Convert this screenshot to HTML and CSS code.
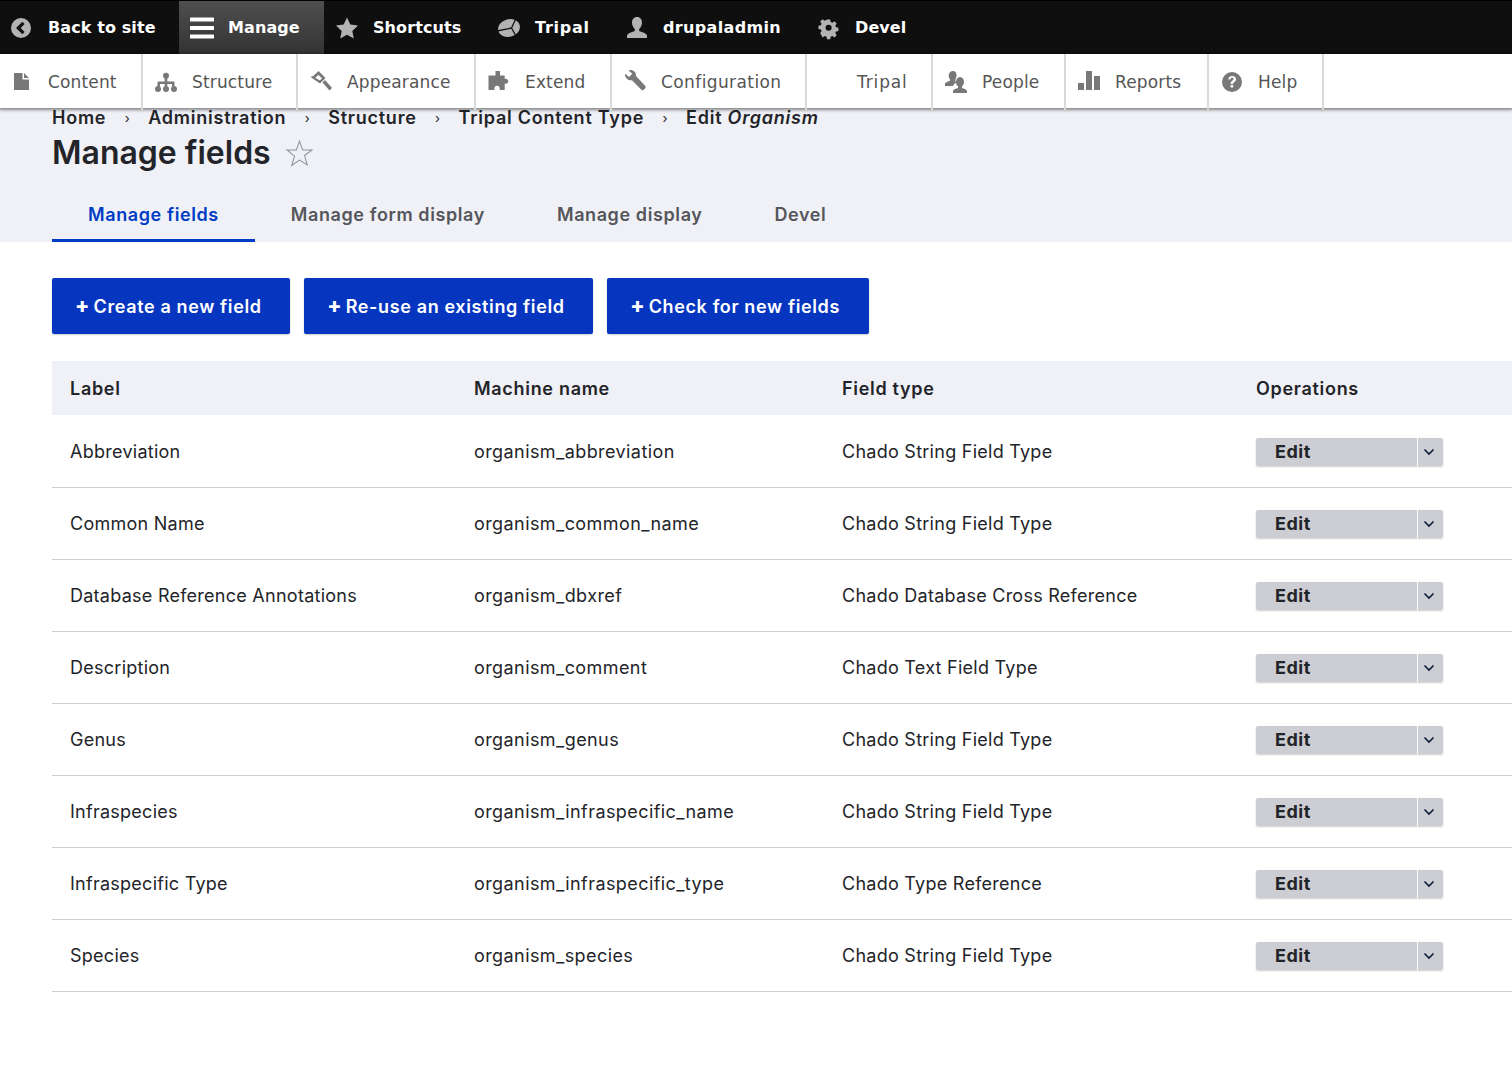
FILE: index.html
```html
<!DOCTYPE html>
<html lang="en">
<head>
<meta charset="utf-8">
<title>Manage fields</title>
<link rel="stylesheet" href="styles.css">
</head>
<body>
<nav class="bar">
  <a class="bar-item first"><svg class="ico" viewBox="0 0 24 24"><circle cx="11" cy="12" r="10" fill="#b3b3b3"/><path d="M13.500 6.800 8.300 12l5.200 5.200" fill="none" stroke="#111" stroke-width="3.200"/></svg>Back to site</a>
  <a class="bar-item active"><svg class="ico" viewBox="0 0 24 24"><path d="M1.200 3.500h21.600M1.200 12h21.600M1.200 20.500h21.600" fill="none" stroke="#fff" stroke-width="4" stroke-linecap="round"/></svg>Manage</a>
  <a class="bar-item"><svg class="ico" viewBox="0 0 24 24"><path d="m12 1.500 3.300 7.100 7.700 1-5.700 5.300 1.500 7.700-6.800-3.800-6.800 3.800 1.500-7.700L1 9.600l7.700-1z" fill="#b3b3b3"/></svg>Shortcuts</a>
  <a class="bar-item short"><svg class="ico" viewBox="0 0 24 24"><ellipse cx="12" cy="12" rx="11" ry="8.800" transform="rotate(-14 12 12)" fill="#b3b3b3"/><path d="M19 2.500 14.500 12 0 15M14.500 12l5 9" fill="none" stroke="#111" stroke-width="1.300"/></svg>Tripal</a>
  <a class="bar-item long"><svg class="ico" viewBox="0 0 24 24"><path d="M12 1c3.300 0 5 2.500 5 5.500 0 2.800-1.300 5.200-2.800 6.500v2c2.500 1 7.300 2.200 7.800 4.500V22H2v-2.500C2.500 17.200 7.300 16 9.800 15v-2C8.300 11.700 7 9.300 7 6.500 7 3.500 8.700 1 12 1z" fill="#b3b3b3"/></svg>drupaladmin</a>
  <a class="bar-item devel"><svg class="ico" viewBox="0 0 24 24"><path fill-rule="evenodd" d="M10 2h4l.6 3 2.100.9 2.600-1.700 2.800 2.800-1.700 2.600.9 2.100 3 .6v3.900l-3 .6-.9 2.100 1.700 2.600-2.800 2.800-2.600-1.700-2.100.9-.6 3h-4l-.6-3-2.100-.9-2.600 1.700L1.500 19l1.700-2.600-.9-2.100-3-.6v-3.900l3-.6.9-2.100L1.500 4.500 4.300 1.700l2.600 1.700 2.100-.9zM12 8.300a3.800 3.800 0 1 0 0 7.600 3.800 3.800 0 0 0 0-7.600z" fill="#b3b3b3" transform="translate(2 2) scale(.8)"/></svg>Devel</a>
</nav>
<nav class="tray">
  <a class="tray-item first"><svg class="tico" viewBox="0 0 24 24"><path d="M4 3h8.500v6.500H19V20H4zM14 3l5 5h-5z" fill="#787878"/></svg>Content</a>
  <a class="tray-item"><svg class="tico" viewBox="0 0 24 24"><path d="M10.700 7h2.600v4.500h6.200a1 1 0 0 1 1 1v4h-2.500v-2.500h-4.700v2.500h-2.600v-2.500H6v2.500H3.500v-4a1 1 0 0 1 1-1h6.200z" fill="#787878"/><circle cx="12" cy="5.800" r="3" fill="#787878"/><circle cx="4" cy="19" r="3" fill="#787878"/><circle cx="12" cy="19" r="3" fill="#787878"/><circle cx="20" cy="19" r="3" fill="#787878"/></svg>Structure</a>
  <a class="tray-item"><svg class="tico" viewBox="0 0 24 24"><path fill-rule="evenodd" d="M9.500 1 16.500 8l-5.500 5.500L1.500 7l3-1.200zM9.400 5 6.200 7.700l4.700 2.900 2.100-2.300z" fill="#787878"/><path d="m13.500 12.500 2.500-2.500 7 8-2.500 2.500z" fill="#787878"/></svg>Appearance</a>
  <a class="tray-item"><svg class="tico" viewBox="0 0 24 24"><path d="M8.500 1h4.500v4.500h4.700V9a2.500 2.500 0 1 1 0 4.500V20h-5.200a2.800 2.800 0 1 0-4.900 0H1.500V5.500h7z" fill="#787878"/></svg>Extend</a>
  <a class="tray-item long"><svg class="tico" viewBox="0 0 24 24"><path d="M7.500 0c3.200 0 5.800 2.500 5.500 6l9.500 10.300c1 1.300-2.400 5-3.800 3.700L9 10.300C5.500 10.800 1.500 8 2 3.700l4 3.300 3.300-3.200L5.500.5z" fill="#787878"/></svg>Configuration</a>
  <a class="tray-item plain short">Tripal</a>
  <a class="tray-item"><svg class="tico" viewBox="0 0 24 24"><path d="M9 1c2.500 0 3.600 2 3.600 4.300 0 .9-.2 1.800-.6 2.700-.9 2-1 3 .3 4.500-1.500 1-2.800 2-3.300 3.500H1v-2c0-1.700 3.600-2.500 5-3.200V9.500C5 8.500 4.700 7 4.700 5.300 4.700 3 6.500 1 9 1zM16 7c2.500 0 4 2.200 4 4.700 0 2-.7 3.600-2 4.600v1.700c1.500.7 5 1.500 5 3.200V23H9v-1.800c0-1.700 3.500-2.500 5-3.200v-1.700c-1.300-1-2-2.600-2-4.600C12 9.200 13.500 7 16 7z" fill="#787878"/></svg>People</a>
  <a class="tray-item"><svg class="tico" viewBox="0 0 24 24"><path d="M1 13h6v7H1zM9 1h6v19H9zM17 6h6v14h-6z" fill="#787878"/></svg>Reports</a>
  <a class="tray-item"><svg class="tico" viewBox="0 0 24 24"><circle cx="12" cy="12" r="10" fill="#787878"/><path d="M8.300 9.500C8.500 7 10 6 12.200 6c2.300 0 3.900 1.300 3.900 3.200 0 2.600-3 2.800-3 4.800h-2.400c0-3.200 2.900-3.300 2.900-4.900 0-.8-.6-1.300-1.500-1.300-1 0-1.500.6-1.700 1.700zM10.600 15h2.600v2.600h-2.600z" fill="#fff"/></svg>Help</a>
</nav>
<header class="head">
  <ol class="crumbs">
    <li>Home</li><li class="sep">›</li>
    <li>Administration</li><li class="sep">›</li>
    <li>Structure</li><li class="sep">›</li>
    <li>Tripal Content Type</li><li class="sep">›</li>
    <li>Edit <em>Organism</em></li>
  </ol>
  <div class="title-row">
    <h1>Manage fields</h1>
    <svg class="star" viewBox="0 0 28 28"><path d="m14 2 3 8.600h9l-7.200 5.400 2.700 9L14 20.400 6.500 25.600l2.700-9L2 10.600h9z" fill="none" stroke="#8e929c" stroke-width="1"/></svg>
  </div>
  <div class="tabs">
    <a class="tab current">Manage fields</a>
    <a class="tab">Manage form display</a>
    <a class="tab">Manage display</a>
    <a class="tab">Devel</a>
  </div>
</header>
<main class="main">
  <div class="actions">
    <a class="btn"><span class="plus">+</span>Create a new field</a>
    <a class="btn"><span class="plus">+</span>Re-use an existing field</a>
    <a class="btn"><span class="plus">+</span>Check for new fields</a>
  </div>
  <table class="fields">
    <thead>
      <tr><th class="c1">Label</th><th class="c2">Machine name</th><th class="c3">Field type</th><th>Operations</th></tr>
    </thead>
    <tbody>
      <tr><td>Abbreviation</td><td>organism_abbreviation</td><td>Chado String Field Type</td><td><div class="drop"><span class="drop-main">Edit</span><span class="drop-tog"><svg viewBox="0 0 12 8"><path d="M1.500 1.500 6 6l4.500-4.500" fill="none" stroke="#101a38" stroke-width="1.600"/></svg></span></div></td></tr>
      <tr><td>Common Name</td><td>organism_common_name</td><td>Chado String Field Type</td><td><div class="drop"><span class="drop-main">Edit</span><span class="drop-tog"><svg viewBox="0 0 12 8"><path d="M1.500 1.500 6 6l4.500-4.500" fill="none" stroke="#101a38" stroke-width="1.600"/></svg></span></div></td></tr>
      <tr><td>Database Reference Annotations</td><td>organism_dbxref</td><td>Chado Database Cross Reference</td><td><div class="drop"><span class="drop-main">Edit</span><span class="drop-tog"><svg viewBox="0 0 12 8"><path d="M1.500 1.500 6 6l4.500-4.500" fill="none" stroke="#101a38" stroke-width="1.600"/></svg></span></div></td></tr>
      <tr><td>Description</td><td>organism_comment</td><td>Chado Text Field Type</td><td><div class="drop"><span class="drop-main">Edit</span><span class="drop-tog"><svg viewBox="0 0 12 8"><path d="M1.500 1.500 6 6l4.500-4.500" fill="none" stroke="#101a38" stroke-width="1.600"/></svg></span></div></td></tr>
      <tr><td>Genus</td><td>organism_genus</td><td>Chado String Field Type</td><td><div class="drop"><span class="drop-main">Edit</span><span class="drop-tog"><svg viewBox="0 0 12 8"><path d="M1.500 1.500 6 6l4.500-4.500" fill="none" stroke="#101a38" stroke-width="1.600"/></svg></span></div></td></tr>
      <tr><td>Infraspecies</td><td>organism_infraspecific_name</td><td>Chado String Field Type</td><td><div class="drop"><span class="drop-main">Edit</span><span class="drop-tog"><svg viewBox="0 0 12 8"><path d="M1.500 1.500 6 6l4.500-4.500" fill="none" stroke="#101a38" stroke-width="1.600"/></svg></span></div></td></tr>
      <tr><td>Infraspecific Type</td><td>organism_infraspecific_type</td><td>Chado Type Reference</td><td><div class="drop"><span class="drop-main">Edit</span><span class="drop-tog"><svg viewBox="0 0 12 8"><path d="M1.500 1.500 6 6l4.500-4.500" fill="none" stroke="#101a38" stroke-width="1.600"/></svg></span></div></td></tr>
      <tr><td>Species</td><td>organism_species</td><td>Chado String Field Type</td><td><div class="drop"><span class="drop-main">Edit</span><span class="drop-tog"><svg viewBox="0 0 12 8"><path d="M1.500 1.500 6 6l4.500-4.500" fill="none" stroke="#101a38" stroke-width="1.600"/></svg></span></div></td></tr>
    </tbody>
  </table>
</main>
</body>
</html>
```
FILE: styles.css
```css
* { box-sizing: border-box; }
html, body { margin: 0; padding: 0; background: #fff; }
body { font-family: Inter, "Liberation Sans", sans-serif; font-size: 18px; color: #232429; letter-spacing: .26px; height: 1070px; overflow: hidden; }
.bar { display: grid; grid-template-columns: 179px 145px 161px 129px 191px 1fr; height: 54px; background: #0f0f0f; border-top: 1px solid #000; font-family: "DejaVu Sans", sans-serif; }
.bar-item { display: flex; align-items: center; gap: 14px; padding-left: 11px; color: #fff; font-weight: 700; font-size: 16px; letter-spacing: .1px; white-space: nowrap; }
.bar-item.first { padding-left: 10px; }
.bar-item.short { padding-left: 12px; letter-spacing: .75px; }
.bar-item.long { letter-spacing: .35px; }
.bar-item.devel { padding-left: 12px; }
.bar-item.active { background: linear-gradient(#4f4f4f, #333); }
.ico { width: 24px; height: 24px; flex: none; }
.tray { display: grid; grid-template-columns: 143px 155px 178px 136px 195px 126px 133px 143px 115px 1fr; height: 54px; background: #fff; box-shadow: 0 1px 3px 1px rgba(0,0,0,.45); position: relative; font-family: "DejaVu Sans", sans-serif; }
.tray-item { display: flex; align-items: center; gap: 14px; padding-left: 11px; color: #555; font-size: 17px; letter-spacing: .15px; border-right: 2px solid #dadada; line-height: 56px; white-space: nowrap; }
.tray-item.first { padding-left: 10px; }
.tray-item.plain { padding-left: 50px; }
.tray-item.short { letter-spacing: .85px; }
.tray-item.long { letter-spacing: .4px; }
.tico { width: 24px; height: 24px; flex: none; }
.head { height: 134px; background: #f0f1f6; padding: 0 52px; }
.crumbs { display: flex; list-style: none; margin: 0; padding: 0; height: 20px; align-items: center; font-weight: 600; font-size: 18px; line-height: 20px; letter-spacing: .76px; }
.crumbs .sep { width: 42px; text-align: center; font-size: 13px; font-weight: 400; letter-spacing: 0; }
.title-row { display: flex; align-items: center; gap: 14px; height: 50px; }
h1 { margin: 0; font-size: 32px; font-weight: 600; letter-spacing: 0; line-height: 50px; }
.star { width: 29px; height: 29px; }
.tabs { display: flex; margin-top: 16px; height: 48px; }
.tab { padding: 0 36px 4px; display: flex; align-items: center; font-weight: 600; color: #55565b; height: 48px; border-bottom: 3px solid transparent; letter-spacing: .6px; }
.tab.current { color: #003cc5; border-bottom-color: #003cc5; }
.main { padding: 36px 0 0 52px; }
.actions { display: flex; gap: 14px; margin-bottom: 27px; }
.btn { display: flex; align-items: center; height: 56px; padding: 0 28.500px 0 24px; background: #0636c0; color: #fff; font-weight: 600; border-radius: 2px; letter-spacing: .63px; white-space: nowrap; box-shadow: 0 1px 2px rgba(0,0,0,.2); }
.plus { width: 17px; flex: none; font-weight: 800; font-size: 21px; line-height: 20px; margin-left: -1px; margin-right: 1.500px; }
.fields { border-collapse: separate; border-spacing: 0; width: 1460px; table-layout: fixed; }
.fields th { height: 54px; background: #f0f1f6; text-align: left; padding: 0 18px; font-weight: 600; letter-spacing: .7px; }
.c1 { width: 404px; }
.c2 { width: 368px; }
.c3 { width: 414px; }
.fields td { height: 72px; padding: 0 18px; border-bottom: 1px solid #d0d0d4; font-weight: 400; }
.fields td:nth-child(2) { letter-spacing: .42px; }
.fields tr:first-child td { height: 73px; padding-top: 1px; }
.drop { display: flex; width: 187px; height: 28px; background: #cdced4; border-radius: 2px; box-shadow: 0 1px 2px rgba(0,0,0,.2); font-weight: 700; letter-spacing: .5px; }
.drop-main { width: 162px; padding-left: 19px; line-height: 28px; border-right: 1px solid #fff; }
.drop-tog { flex: 1; display: flex; align-items: center; justify-content: center; padding-right: 3px; }
.drop-tog svg { width: 12px; height: 8px; }
```
